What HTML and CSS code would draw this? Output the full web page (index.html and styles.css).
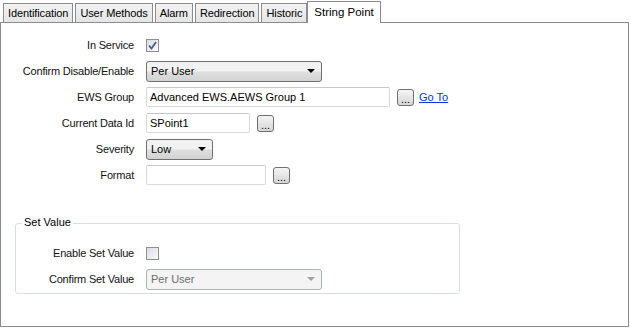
FILE: index.html
```html
<!DOCTYPE html>
<html lang="en">
<head>
  <meta charset="UTF-8">
  <title>String Point</title>
  <link rel="stylesheet" href="styles.css">
</head>
<body>
  <div class="tabs">
    <div class="tab">Identification</div>
    <div class="tab">User Methods</div>
    <div class="tab">Alarm</div>
    <div class="tab">Redirection</div>
    <div class="tab">Historic</div>
    <div class="tab active">String Point</div>
  </div>

  <div class="panel">
    <div class="form">
      <div class="row">
        <label class="lbl">In Service</label>
        <span class="check checked">
          <svg width="9" height="9" viewBox="0 0 9 9"><path d="M1 4.5 L3.5 7.5 L8 1" fill="none" stroke="#4a5d93" stroke-width="1.8"/></svg>
        </span>
      </div>
      <div class="row">
        <label class="lbl">Confirm Disable/Enable</label>
        <div class="combo wide">Per User<span class="arrow"></span></div>
      </div>
      <div class="row">
        <label class="lbl">EWS Group</label>
        <div class="text ews">Advanced EWS.AEWS Group 1</div>
        <button class="dots">...</button>
        <a class="link" href="#">Go To</a>
      </div>
      <div class="row">
        <label class="lbl">Current Data Id</label>
        <div class="text dataid">SPoint1</div>
        <button class="dots">...</button>
      </div>
      <div class="row">
        <label class="lbl">Severity</label>
        <div class="combo small">Low<span class="arrow"></span></div>
      </div>
      <div class="row">
        <label class="lbl">Format</label>
        <div class="text format"></div>
        <button class="dots">...</button>
      </div>
    </div>

    <div class="group">
      <span class="legend">Set Value</span>
      <div class="row">
        <label class="lbl">Enable Set Value</label>
        <span class="check"></span>
      </div>
      <div class="row">
        <label class="lbl">Confirm Set Value</label>
        <div class="combo wide disabled">Per User<span class="arrow"></span></div>
      </div>
    </div>
  </div>
</body>
</html>
```

FILE: styles.css
```css
/* General Reset */
* {
  margin: 0;
  padding: 0;
  box-sizing: border-box;
  font-family: "Liberation Sans", Arial, sans-serif;
  font-size: 11px;
}

body {
  background: #fff;
  color: #000;
  width: 631px;
  height: 328px;
}

/* Tabs */
.tabs {
  display: flex;
  align-items: flex-end;
  height: 22px;
  padding-left: 3px;
  gap: 2px;
}

.tab {
  height: 19px;
  line-height: 18px;
  padding: 0 4px;
  border: 1px solid #898c95;
  border-bottom: none;
  background: linear-gradient(#f3f3f3, #e5e5e5);
  color: #000;
  letter-spacing: -0.1px;
}

.tab.active {
  height: 22px;
  line-height: 20px;
  padding: 0 6px;
  margin-left: -2px;
  margin-bottom: -1px;
  background: #fff;
  position: relative;
  z-index: 1;
  font-size: 11.5px;
  letter-spacing: 0;
}

/* Panel */
.panel {
  width: 629px;
  height: 305px;
  border: 1px solid #898c95;
}

.form {
  padding-top: 12px;
  display: flex;
  flex-direction: column;
  gap: 6px;
}

.row {
  display: flex;
  align-items: center;
  height: 20px;
  gap: 12px;
}

.lbl {
  width: 133px;
  text-align: right;
  color: #111;
  letter-spacing: -0.2px;
}

/* Controls */
.check {
  width: 13px;
  height: 13px;
  border: 1px solid #8f8f8f;
  background: linear-gradient(135deg, #d8dce4, #fbfbfb);
  display: flex;
  align-items: center;
  justify-content: center;
}

.combo {
  height: 21px;
  line-height: 19px;
  padding-left: 4px;
  border: 1px solid #707070;
  border-radius: 3px;
  background: linear-gradient(#f2f2f2 45%, #dedede 55%, #d2d2d2);
  position: relative;
}

.combo.wide {
  width: 176px;
}

.combo.small {
  width: 67px;
}

.combo.disabled {
  background: #f4f4f4;
  border-color: #adb2b5;
  color: #6d6d6d;
}

.arrow {
  position: absolute;
  right: 6px;
  top: 7px;
  border-left: 4px solid transparent;
  border-right: 4px solid transparent;
  border-top: 4px solid #000;
}

.combo.disabled .arrow {
  border-top-color: #a0a0a0;
}

.text {
  height: 20px;
  line-height: 18px;
  padding-left: 3px;
  border: 1px solid #d6d9de;
  border-top-color: #c5c8cd;
  border-radius: 2px;
  background: #fff;
}

.text.ews {
  width: 244px;
}

.text.dataid {
  width: 104px;
}

.text.format {
  width: 120px;
}

.dots {
  width: 17px;
  height: 17px;
  margin-left: -5px;
  border: 1px solid #707070;
  border-radius: 3px;
  background: linear-gradient(#f4f4f4, #d6d6d6);
  line-height: 18px;
  text-align: center;
  color: #000;
}

.link {
  margin-left: -7px;
  color: #0033ff;
}

/* Set Value group */
.group {
  position: relative;
  width: 445px;
  height: 71px;
  margin: 38px 0 0 14px;
  padding-top: 19px;
  border: 1px solid #d5dfe5;
  border-radius: 3px;
  display: flex;
  flex-direction: column;
  gap: 6px;
}

.legend {
  position: absolute;
  top: -8px;
  left: 6px;
  padding: 0 2px;
  background: #fff;
}

.group .lbl {
  width: 118px;
}
```
